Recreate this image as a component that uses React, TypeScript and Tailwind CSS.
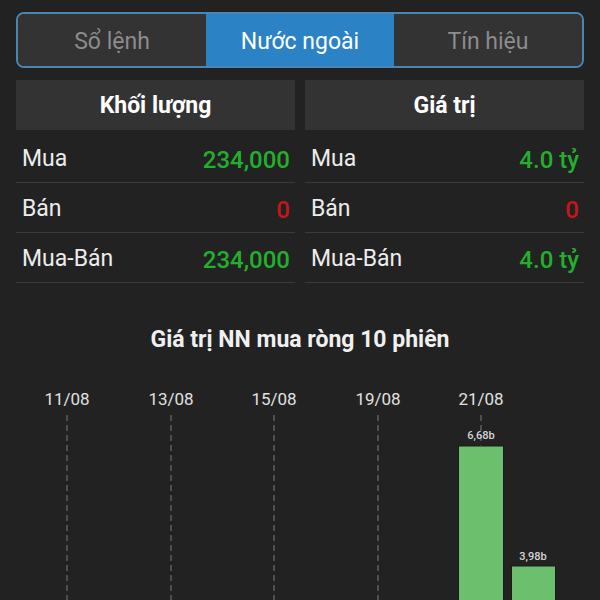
import React from "react";

// Tab bar entries
const tabs = [
  { label: "Sổ lệnh", active: false },
  { label: "Nước ngoài", active: true },
  { label: "Tín hiệu", active: false },
];

interface Row {
  label: string;
  value: string;
  up: boolean;
}

const volumeRows: Row[] = [
  { label: "Mua", value: "234,000", up: true },
  { label: "Bán", value: "0", up: false },
  { label: "Mua-Bán", value: "234,000", up: true },
];

const valueRows: Row[] = [
  { label: "Mua", value: "4.0 tỷ", up: true },
  { label: "Bán", value: "0", up: false },
  { label: "Mua-Bán", value: "4.0 tỷ", up: true },
];

const dates = [
  { label: "11/08", x: 67 },
  { label: "13/08", x: 171 },
  { label: "15/08", x: 274 },
  { label: "19/08", x: 378 },
  { label: "21/08", x: 481 },
];

function StatTable({ title, rows }: { title: string; rows: Row[] }) {
  return (
    <div className="flex flex-col">
      <div className="h-[50px] bg-[#333333] flex items-center justify-center pt-[2px] text-[23px] font-bold text-white">
        {title}
      </div>
      <div className="mt-[3px]">
        {rows.map((r) => (
          <div
            key={r.label}
            className="h-[50px] flex items-center justify-between pl-[6px] pr-[5px] pt-[4px] border-b border-[#3a3a3a] text-[23px]"
          >
            <span className="text-[#ececec]">{r.label}</span>
            <span className={`font-medium text-[24px] ${r.up ? "text-[#22b02c]" : "text-[#c4161c]"}`}>
              {r.value}
            </span>
          </div>
        ))}
      </div>
    </div>
  );
}

function NetChart() {
  return (
    <svg width="600" height="250" viewBox="0 0 600 250" className="block -mx-4">
      {dates.map((d) => (
        <g key={d.label}>
          <text
            x={d.x}
            y={49}
            textAnchor="middle"
            fontSize="17"
            fill="#e0e0e0"
            fontFamily="Roboto, sans-serif"
          >
            {d.label}
          </text>
          <line
            x1={d.x}
            y1={59}
            x2={d.x}
            y2={250}
            stroke="#7a7a7a"
            strokeWidth="1"
            strokeDasharray="6 4"
          />
        </g>
      ))}
      <rect x={458.5} y={90} width={45} height={170} fill="#6cbf6c" stroke="#1a1a1a" strokeWidth="1" />
      <rect x={511.5} y={210} width={44} height={50} fill="#6cbf6c" stroke="#1a1a1a" strokeWidth="1" />
      <text x={481} y={83} textAnchor="middle" fontSize="11" fontWeight="500" fill="#d4d4d4" fontFamily="Roboto, sans-serif">
        6,68b
      </text>
      <text x={533} y={204} textAnchor="middle" fontSize="11" fontWeight="500" fill="#d4d4d4" fontFamily="Roboto, sans-serif">
        3,98b
      </text>
    </svg>
  );
}

export default function App() {
  return (
    <div
      className="min-h-[600px] bg-[#222222] px-4 pt-3 overflow-hidden"
      style={{ fontFamily: "Roboto, 'Noto Sans', sans-serif" }}
    >
      {/* Tabs */}
      <div className="h-14 flex rounded-lg border-2 border-[#4a86b4] overflow-hidden">
        {tabs.map((t) => (
          <div
            key={t.label}
            className={`flex-1 flex items-center justify-center pt-[5px] text-[23px] ${
              t.active ? "bg-[#2b82c4] text-white" : "bg-[#333333] text-[#8c8c8c]"
            }`}
          >
            {t.label}
          </div>
        ))}
      </div>

      {/* Stats */}
      <div className="mt-3 grid grid-cols-2 gap-[10px]">
        <StatTable title="Khối lượng" rows={volumeRows} />
        <StatTable title="Giá trị" rows={valueRows} />
      </div>

      {/* Chart */}
      <div className="mt-[41px] text-center text-[23px] font-bold text-[#f0f0f0] leading-8">
        Giá trị NN mua ròng 10 phiên
      </div>
      <NetChart />
    </div>
  );
}
